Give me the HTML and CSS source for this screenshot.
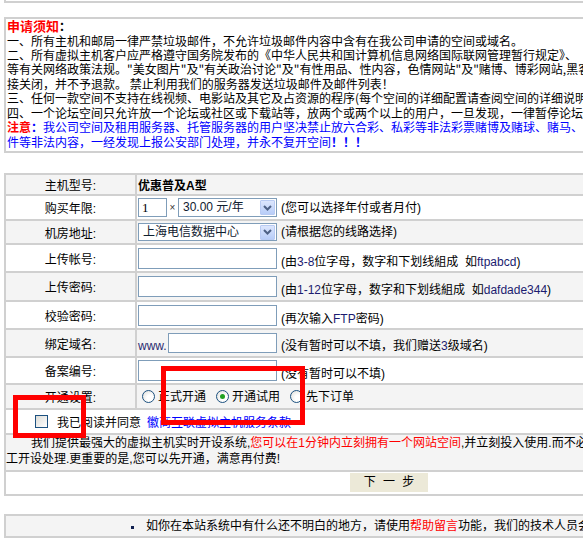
FILE: index.html
```html
<!DOCTYPE html>
<html>
<head>
<meta charset="utf-8">
<title>申请虚拟主机</title>
<link rel="stylesheet" href="styles.css">
</head>
<body>
<div class="page">
  <div class="topbox"></div>

  <div class="notice">
    <div class="ln l14"><b class="red big">申请须知</b><b>：</b></div>
    <div class="ln l15">一、所有主机和邮局一律严禁垃圾邮件，不允许垃圾邮件内容中含有在我公司申请的空间或域名。</div>
    <div class="ln l13">二、所有虚拟主机客户应严格遵守国务院发布的《中华人民共和国计算机信息网络国际联网管理暂行规定》、</div>
    <div class="ln l16">等有关网络政策法规。"美女图片"及"有关政治讨论"及"有性用品、性内容，色情网站"及"赌博、博彩网站,黑客及破解网站"等一律直</div>
    <div class="ln l13">接关闭，并不予退款。 禁止利用我们的服务器发送垃圾邮件及邮件列表！</div>
    <div class="ln l16">三、任何一款空间不支持在线视频、电影站及其它及占资源的程序(每个空间的详细配置请查阅空间的详细说明)</div>
    <div class="ln l13">四、一个论坛空间只允许放一个论坛或社区或下载站等，放两个或两个以上的用户，一旦发现，一律暂停论坛空间。</div>
    <div class="ln l16 blue"><b class="red">注意</b><b>：</b>我公司空间及租用服务器、托管服务器的用户坚决禁止放六合彩、私彩等非法彩票赌博及赌球、赌马、赌狗等非法事</div>
    <div class="ln l14 blue">件等非法内容，一经发现上报公安部门处理，并永不复开空间<b>！！！</b></div>
  </div>

  <div class="form">
    <div class="row gray h21">
      <div class="lab">主机型号:</div>
      <div class="val"><b class="model">优惠普及A型</b></div>
    </div>
    <div class="row h25">
      <div class="lab">购买年限:</div>
      <div class="val">
        <div class="grp">
          <span class="qty">1</span>
          <span class="times">×</span>
          <span class="sel sel-short"><span class="sel-text">30.00 元/年</span><span class="sel-btn"><svg width="9" height="6" viewBox="0 0 9 6"><path d="M1 1 L4.5 4.5 L8 1" fill="none" stroke="#4d6185" stroke-width="2"/></svg></span></span>
          <span class="hint">(您可以选择年付或者月付)</span>
        </div>
      </div>
    </div>
    <div class="row gray h24">
      <div class="lab">机房地址:</div>
      <div class="val">
        <div class="grp">
          <span class="sel sel-long"><span class="sel-text">上海电信数据中心</span><span class="sel-btn"><svg width="9" height="6" viewBox="0 0 9 6"><path d="M1 1 L4.5 4.5 L8 1" fill="none" stroke="#4d6185" stroke-width="2"/></svg></span></span>
          <span class="hint">(请根据您的线路选择)</span>
        </div>
      </div>
    </div>
    <div class="row h28">
      <div class="lab">上传帐号:</div>
      <div class="val">
        <div class="grp grp-low">
          <span class="inp"></span>
          <span class="hint">(由<span class="lat">3-8</span>位字母，数字和下划线組成&nbsp; 如<span class="lat">ftpabcd</span>)</span>
        </div>
      </div>
    </div>
    <div class="row gray h29">
      <div class="lab">上传密码:</div>
      <div class="val">
        <div class="grp grp-low">
          <span class="inp"></span>
          <span class="hint">(由<span class="lat">1-12</span>位字母，数字和下划线組成&nbsp; 如<span class="lat">dafdade344</span>)</span>
        </div>
      </div>
    </div>
    <div class="row h28">
      <div class="lab">校验密码:</div>
      <div class="val">
        <div class="grp grp-low">
          <span class="inp"></span>
          <span class="hint">(再次输入<span class="lat">FTP</span>密码)</span>
        </div>
      </div>
    </div>
    <div class="row gray h28">
      <div class="lab">绑定域名:</div>
      <div class="val">
        <div class="grp grp-low">
          <span class="www">www.</span><span class="inp inp-dom"></span>
          <span class="hint">(没有暂时可以不填，我们赠送<span class="lat">3</span>级域名)</span>
        </div>
      </div>
    </div>
    <div class="row h27">
      <div class="lab">备案编号:</div>
      <div class="val">
        <div class="grp grp-low">
          <span class="inp"></span>
          <span class="hint">(没有暂时可以不填)</span>
        </div>
      </div>
    </div>
    <div class="row gray h25">
      <div class="lab">开通设置:</div>
      <div class="val">
        <div class="radios">
          <span class="opt"><span class="radio"></span>正式开通</span>
          <span class="opt"><span class="radio checked"></span>开通试用</span>
          <span class="opt"><span class="radio"></span>先下订单</span>
        </div>
      </div>
    </div>
    <div class="row h25 full">
      <div class="agree"><span class="check"></span><span class="agree-text">我已阅读并同意</span><a class="link" href="#">徽商互联虚拟主机服务条款</a></div>
    </div>
    <div class="row gray h37 full">
      <div class="info">
        <div class="info-line first">我们提供最强大的虚拟主机实时开设系统,<span class="red">您可以在1分钟内立刻拥有一个网站空间</span>,并立刻投入使用.而不必等待人</div>
        <div class="info-line">工开设处理.更重要的是,您可以先开通，满意再付费!</div>
      </div>
    </div>
    <div class="row h24 full center">
      <span class="btn">下 一 步</span>
    </div>
  </div>

  <div class="footer">
    <span class="dot"></span><span>如你在本站系统中有什么还不明白的地方，请使用<span class="red">帮助留言</span>功能，我们的技术人员会及时为您解答。</span>
  </div>

  <div class="mark mark1"></div>
  <div class="mark mark2"></div>
</div>
</body>
</html>
```
FILE: styles.css
```css
html, body {
  margin: 0;
  padding: 0;
  overflow: hidden;
  background: #fff;
}

body {
  font-family: "Liberation Sans", "Noto Sans CJK SC", sans-serif;
  font-size: 12px;
  color: #000;
}

.page {
  position: relative;
  width: 780px;
}

.topbox {
  margin-left: 4px;
  width: 770px;
  height: 1px;
  border-left: 2px solid #d0d0d0;
  border-bottom: 2px solid #d0d0d0;
}

.notice {
  margin: 14px 0 0 4px;
  width: 770px;
  box-sizing: border-box;
  border: 2px solid #d0d0d0;
  padding: 0 0 2px 1px;
  overflow: hidden;
  font-family: "Noto Sans CJK SC", "Liberation Sans", sans-serif;
}

.ln {
  white-space: nowrap;
}
.l13 { height: 13px; line-height: 13px; }
.l14 { height: 14px; line-height: 14px; }
.l15 { height: 15px; line-height: 15px; }
.l16 { height: 16px; line-height: 16px; }

.red { color: #ff0000; }
.blue { color: #0000ff; }
.big { font-size: 13px; }

.form {
  margin: 20px 0 0 4px;
  width: 770px;
  box-sizing: border-box;
  border: 2px solid #d0d0d0;
  border-bottom: none;
}

.row {
  display: flex;
  box-sizing: border-box;
  border-bottom: 2px solid #d0d0d0;
  background: #fff;
}
.row.gray { background: #f4f4f4; }
.h21 { height: 21px; }
.h24 { height: 24px; }
.h25 { height: 25px; }
.h27 { height: 27px; }
.h28 { height: 28px; }
.h29 { height: 29px; }
.h37 { height: 37px; }

.lab {
  width: 131px;
  flex: none;
  box-sizing: border-box;
  border-right: 2px solid #d0d0d0;
  display: flex;
  align-items: center;
  justify-content: center;
  white-space: nowrap;
}

.val {
  flex: 1;
  display: flex;
  align-items: center;
  padding-left: 1px;
  white-space: nowrap;
}

.model { font-weight: bold; }

.grp {
  display: flex;
  align-items: center;
}
.grp-low {
  align-items: flex-end;
}

.hint {
  margin-left: 4px;
  line-height: 14px;
}

.lat { color: #1c1c70; }

.qty {
  width: 29px;
  height: 19px;
  box-sizing: border-box;
  border: 1px solid #7f9db9;
  background: #fff;
  font-family: "Liberation Serif", serif;
  font-size: 13px;
  line-height: 18px;
  padding-left: 3px;
}

.times {
  font-size: 10px;
  width: 11px;
  text-align: center;
  color: #333;
}

.sel {
  display: flex;
  align-items: center;
  height: 19px;
  box-sizing: border-box;
  border: 1px solid #7f9db9;
  background: #fff;
  padding: 1px;
}
.sel-short { width: 99px; }
.sel-long { width: 139px; height: 18px; }

.sel-text {
  flex: 1;
  padding-left: 3px;
  line-height: 15px;
  color: #102030;
}

.sel-btn {
  width: 15px;
  height: 15px;
  box-sizing: border-box;
  border: 1px solid #b9cbf3;
  background: linear-gradient(#dce6fd, #b8cdf8);
  display: flex;
  align-items: center;
  justify-content: center;
  border-radius: 1px;
}

.inp {
  width: 139px;
  height: 21px;
  box-sizing: border-box;
  border: 1px solid #7f9db9;
  background: #fff;
}
.inp-dom { width: 109px; height: 20px; }

.www {
  width: 30px;
  line-height: 14px;
  color: #2a2a70;
}

.radios {
  display: flex;
  align-items: center;
  padding-left: 4px;
}
.opt {
  display: flex;
  align-items: center;
  margin-right: 10px;
  line-height: 14px;
}
.radio {
  width: 13px;
  height: 13px;
  box-sizing: border-box;
  border-radius: 50%;
  border: 1px solid #1c5180;
  background: radial-gradient(circle at 65% 65%, #fff 30%, #dcdcd7 100%);
  margin-right: 3px;
  display: flex;
  align-items: center;
  justify-content: center;
}
.radio.checked::after {
  content: "";
  width: 5px;
  height: 5px;
  border-radius: 50%;
  background: #21a121;
}

.full { display: flex; align-items: center; }

.agree {
  display: flex;
  align-items: center;
  padding-left: 29px;
  white-space: nowrap;
}
.check {
  width: 13px;
  height: 13px;
  box-sizing: border-box;
  border: 1px solid #1c5180;
  background: linear-gradient(135deg, #dcdcd7, #fff);
  margin-right: 9px;
}
.agree-text { margin-right: 6px; }
.link {
  color: #0000ff;
  text-decoration: none;
}

.info {
  align-self: flex-start;
}
.info-line {
  white-space: nowrap;
  line-height: 16px;
}
.info-line.first { text-indent: 25px; }

.center { justify-content: center; }

.btn {
  width: 78px;
  height: 19px;
  line-height: 19px;
  text-align: center;
  background: #ece9d8;
  margin-top: -1px;
  word-spacing: 4px;
}

.footer {
  margin: 18px 0 0 4px;
  width: 770px;
  box-sizing: border-box;
  border: 2px solid #d0d0d0;
  background: #f4f4f4;
  height: 24px;
  line-height: 20px;
  padding-left: 125px;
  white-space: nowrap;
  display: flex;
  align-items: center;
}
.dot {
  width: 3px;
  height: 3px;
  background: #102050;
  margin-right: 12px;
  margin-top: 3px;
}

.mark {
  position: absolute;
  border: 5px solid #ff0000;
  box-sizing: border-box;
}
.mark1 {
  left: 13px;
  top: 395px;
  width: 73px;
  height: 43px;
}
.mark2 {
  left: 161px;
  top: 366px;
  width: 144px;
  height: 59px;
}
```
